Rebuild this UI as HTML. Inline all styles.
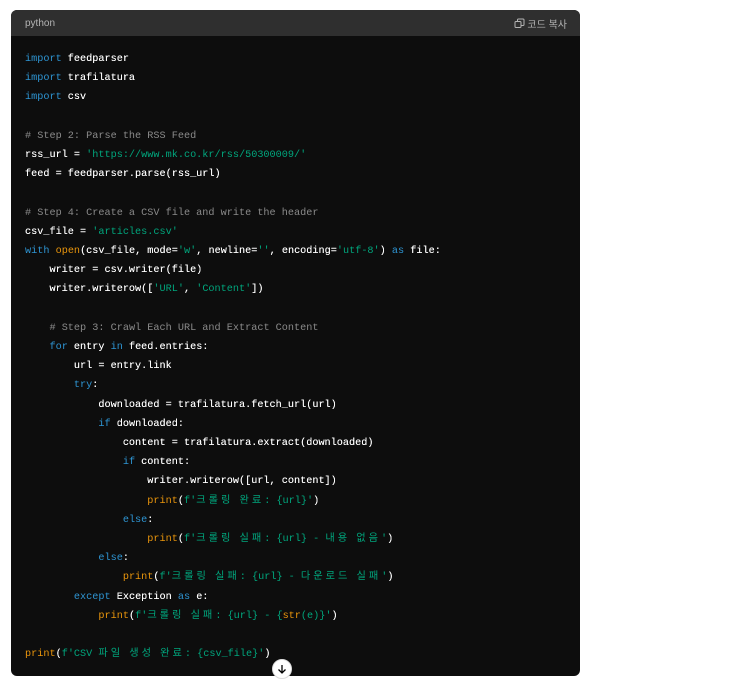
<!DOCTYPE html>
<html><head><meta charset="utf-8"><style>
body{margin:0;background:#fff;width:745px;height:683px;position:relative;overflow:hidden}
.blk{position:absolute;left:11px;top:10px;width:569px;height:666px;background:#0d0d0d;border-radius:6px;overflow:hidden}
.hd{height:26px;background:#2f2f2f;color:#b4b4b4;font:10px "Liberation Sans","Noto Sans CJK KR",sans-serif;display:flex;align-items:center;justify-content:space-between;padding:0 13px 0 14px}
pre{margin:0;position:absolute;left:14px;top:40px;font:10.2px/19.2px "Liberation Mono","Noto Sans CJK KR",monospace;color:#fff;text-shadow:0 0 0.3px #fff}
.k{color:#2e95d3;text-shadow:none}.s{color:#00a67d;text-shadow:none}.c{color:#8a8a8a;text-shadow:none}.f{color:#e9950c;text-shadow:none}
.h{letter-spacing:3px}
.btn{position:absolute;left:272px;top:659px;width:20px;height:20px;border-radius:50%;background:#fff;border:1px solid #ddd;box-sizing:border-box;display:flex;align-items:center;justify-content:center}
</style></head><body>
<div class="blk"><div class="hd"><span>python</span><span><svg width="11" height="11" viewBox="0 0 11 11" style="vertical-align:-1px"><rect x="1" y="3.5" width="6" height="6" rx="1" fill="none" stroke="#b4b4b4"/><path d="M3.5 3.5V2a1 1 0 0 1 1-1h4.5a1 1 0 0 1 1 1v4.5a1 1 0 0 1-1 1H7" fill="none" stroke="#b4b4b4"/></svg> 코드 복사</span></div>
<pre><span class="k">import</span> feedparser
<span class="k">import</span> trafilatura
<span class="k">import</span> csv

<span class="c"># Step 2: Parse the RSS Feed</span>
rss_url = <span class="s">'https://www.mk.co.kr/rss/50300009/'</span>
feed = feedparser.parse(rss_url)

<span class="c"># Step 4: Create a CSV file and write the header</span>
csv_file = <span class="s">'articles.csv'</span>
<span class="k">with</span> <span class="f">open</span>(csv_file, mode=<span class="s">'w'</span>, newline=<span class="s">''</span>, encoding=<span class="s">'utf-8'</span>) <span class="k">as</span> file:
    writer = csv.writer(file)
    writer.writerow([<span class="s">'URL'</span>, <span class="s">'Content'</span>])

    <span class="c"># Step 3: Crawl Each URL and Extract Content</span>
    <span class="k">for</span> entry <span class="k">in</span> feed.entries:
        url = entry.link
        <span class="k">try</span>:
            downloaded = trafilatura.fetch_url(url)
            <span class="k">if</span> downloaded:
                content = trafilatura.extract(downloaded)
                <span class="k">if</span> content:
                    writer.writerow([url, content])
                    <span class="f">print</span>(<span class="s">f'<span class="h">크롤링</span> <span class="h">완료</span>: {url}'</span>)
                <span class="k">else</span>:
                    <span class="f">print</span>(<span class="s">f'<span class="h">크롤링</span> <span class="h">실패</span>: {url} - <span class="h">내용</span> <span class="h">없음</span>'</span>)
            <span class="k">else</span>:
                <span class="f">print</span>(<span class="s">f'<span class="h">크롤링</span> <span class="h">실패</span>: {url} - <span class="h">다운로드</span> <span class="h">실패</span>'</span>)
        <span class="k">except</span> Exception <span class="k">as</span> e:
            <span class="f">print</span>(<span class="s">f'<span class="h">크롤링</span> <span class="h">실패</span>: {url} - {</span><span class="f">str</span><span class="s">(e)}'</span>)

<span class="f">print</span>(<span class="s">f'CSV <span class="h">파일</span> <span class="h">생성</span> <span class="h">완료</span>: {csv_file}'</span>)</pre>
</div>
<div class="btn"><svg width="10" height="10" viewBox="0 0 10 10"><path d="M5 1v8M1.5 5.5L5 9l3.5-3.5" fill="none" stroke="#000" stroke-width="1.3"/></svg></div>
</body></html>
